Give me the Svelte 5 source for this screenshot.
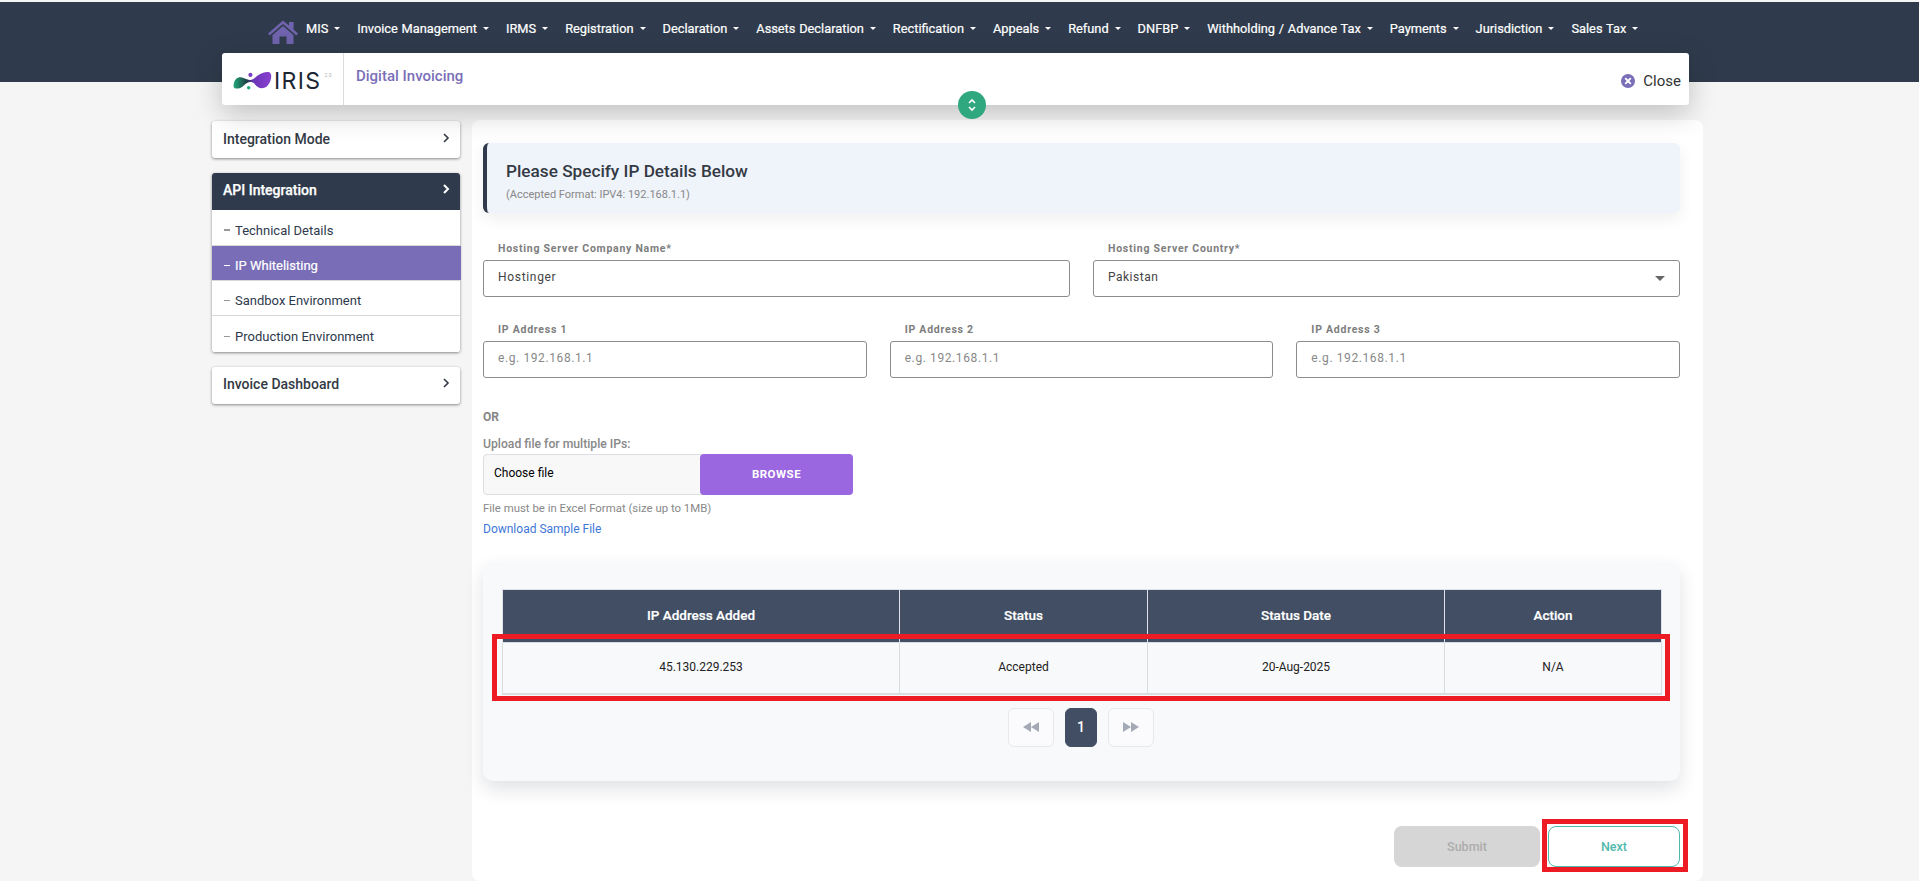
<script>
  const navItems = ['MIS','Invoice Management','IRMS','Registration','Declaration','Assets Declaration','Rectification','Appeals','Refund','DNFBP','Withholding / Advance Tax','Payments','Jurisdiction','Sales Tax'];
  const subItems = [
    { label: 'Technical Details', active: false },
    { label: 'IP Whitelisting', active: true },
    { label: 'Sandbox Environment', active: false },
    { label: 'Production Environment', active: false }
  ];
  const ipFields = ['IP Address 1','IP Address 2','IP Address 3'];
</script>

<div class="page">
  <div class="topbar">
    <nav class="nav">
      <svg class="home" viewBox="0 0 30 24" aria-hidden="true">
        <path d="M15 0.5 L0 13.5 L1.6 15.4 L15 4 L28.4 15.4 L30 13.5 L25.6 9.6 L25.6 2 L21 2 L21 5.6 Z" fill="#6f63ad"/>
        <path d="M15 6 L4.5 15 L4.5 24 L11.5 24 L11.5 16.5 L18.5 16.5 L18.5 24 L25.5 24 L25.5 15 Z" fill="#6f63ad"/>
      </svg>
      {#each navItems as item}
        <span class="nav-item">{item}<i class="caret"></i></span>
      {/each}
    </nav>
  </div>

  <header class="head-card">
    <div class="logo">
      <svg class="blob" viewBox="0 0 46 22" aria-hidden="true">
        <defs>
          <linearGradient id="g" x1="0" x2="1" y1="0" y2="0">
            <stop offset="0" stop-color="#1fa878"/>
            <stop offset="0.36" stop-color="#1f3d45"/>
            <stop offset="0.52" stop-color="#6a37b8"/>
            <stop offset="1" stop-color="#8a3fd0"/>
          </linearGradient>
        </defs>
        <path d="M0.5 17 C1 8 7 6 12 8 C17 10 20 12 25 8 C30 3 37 0 42 1.5 C46 4 44 13 39 18 C33 22 28 19 25 15 C21 11 16 13 12 17 C8 21 0 22 0.5 17 Z" fill="url(#g)"/>
        <circle cx="20" cy="4.5" r="2.4" fill="#7c3fc4"/>
        <circle cx="18" cy="19.5" r="2" fill="#1fa878"/>
      </svg>
      <span class="iris">IRIS</span>
      <span class="ver">2.0</span>
    </div>
    <div class="head-title">Digital Invoicing</div>
    <div class="close">
      <svg class="close-icon" viewBox="0 0 14 14" aria-hidden="true">
        <circle cx="7" cy="7" r="7" fill="#7a6fb8"/>
        <path d="M4.7 4.7 L9.3 9.3 M9.3 4.7 L4.7 9.3" stroke="#fff" stroke-width="1.9" stroke-linecap="round"/>
      </svg>
      <span>Close</span>
    </div>
  </header>

  <div class="toggle">
    <svg viewBox="0 0 10 14" aria-hidden="true">
      <path d="M2 5 L5 2 L8 5 M2 9 L5 12 L8 9" fill="none" stroke="#fff" stroke-width="1.6"/>
    </svg>
  </div>

  <div class="body">
    <aside class="side">
      <div class="side-card">
        <div class="side-head"><span>Integration Mode</span>
          <svg class="chev" viewBox="0 0 8 12"><path d="M2 2 L6 6 L2 10" fill="none" stroke="currentColor" stroke-width="1.6"/></svg>
        </div>
      </div>
      <div class="side-card">
        <div class="side-head dark"><span>API Integration</span>
          <svg class="chev" viewBox="0 0 8 12"><path d="M2 2 L6 6 L2 10" fill="none" stroke="currentColor" stroke-width="2"/></svg>
        </div>
        {#each subItems as s}
          <div class="sub" class:active={s.active}><i class="dash"></i>{s.label}</div>
        {/each}
      </div>
      <div class="side-card">
        <div class="side-head up"><span>Invoice Dashboard</span>
          <svg class="chev" viewBox="0 0 8 12"><path d="M2 2 L6 6 L2 10" fill="none" stroke="currentColor" stroke-width="1.6"/></svg>
        </div>
      </div>
    </aside>

    <main class="main">
      <section class="banner">
        <h1>Please Specify IP Details Below</h1>
        <p>(Accepted Format: IPV4: 192.168.1.1)</p>
      </section>

      <div class="row two">
        <div class="field">
          <span class="flabel">Hosting Server Company Name*</span>
          <div class="control">Hostinger</div>
        </div>
        <div class="field">
          <span class="flabel">Hosting Server Country*</span>
          <div class="control select">Pakistan<i class="sel-caret"></i></div>
        </div>
      </div>

      <div class="row three">
        {#each ipFields as f}
          <div class="field">
            <span class="flabel">{f}</span>
            <div class="control ph">e.g. 192.168.1.1</div>
          </div>
        {/each}
      </div>

      <div class="or">OR</div>
      <div class="upload-label">Upload file for multiple IPs:</div>
      <div class="file">
        <span class="choose">Choose file</span>
        <span class="browse">BROWSE</span>
      </div>
      <div class="hint">File must be in Excel Format (size up to 1MB)</div>
      <div class="dl">Download Sample File</div>

      <section class="table-card">
        <table>
          <thead>
            <tr>
              <th class="c1">IP Address Added</th>
              <th class="c2">Status</th>
              <th class="c3">Status Date</th>
              <th>Action</th>
            </tr>
          </thead>
          <tbody>
            <tr>
              <td>45.130.229.253</td>
              <td>Accepted</td>
              <td>20-Aug-2025</td>
              <td>N/A</td>
            </tr>
          </tbody>
        </table>
        <div class="pager">
          <span class="pg">
            <svg viewBox="0 0 18 12"><path d="M9 1 L9 11 L1 6 Z M17 1 L17 11 L9 6 Z" fill="#a3a9b5"/></svg>
          </span>
          <span class="pg cur">1</span>
          <span class="pg">
            <svg viewBox="0 0 18 12"><path d="M1 1 L1 11 L9 6 Z M9 1 L9 11 L17 6 Z" fill="#a3a9b5"/></svg>
          </span>
        </div>
      </section>

      <div class="actions">
        <span class="btn submit">Submit</span>
        <span class="btn next">Next</span>
      </div>
    </main>
  </div>

  <div class="mark mark-row"></div>
  <div class="mark mark-next"></div>
</div>

<style>
  :global(body) {
    margin: 0;
    background: #f5f5f5;
    font-family: Roboto, "Liberation Sans", sans-serif;
    overflow: hidden;
  }
  .page {
    position: relative;
    width: 1919px;
    height: 881px;
    padding-top: 2px;
    box-sizing: border-box;
    overflow: hidden;
    background: #f5f5f5;
  }
  .topbar {
    height: 80px;
    background: #2f3b4c;
  }
  .nav {
    display: flex;
    align-items: flex-start;
    gap: 17px;
    padding: 18px 0 0 268px;
  }
  .home { width: 30px; height: 24px; margin-right: -9px; }
  .nav-item {
    display: inline-flex;
    align-items: center;
    gap: 6px;
    height: 18px;
    margin-top: -1px;
    color: #fff;
    font-size: 12.8px;
    font-weight: 400;
    word-spacing: 0.6px;
    -webkit-text-stroke: 0.2px #fff;
    white-space: nowrap;
  }
  .caret {
    width: 0;
    height: 0;
    border-left: 3px solid transparent;
    border-right: 3px solid transparent;
    border-top: 3px solid #fff;
  }
  .head-card {
    position: relative;
    z-index: 3;
    display: flex;
    align-items: stretch;
    height: 52px;
    margin: -29px 230px 0 222px;
    background: #fff;
    border-radius: 3px;
    box-shadow: 0 8px 28px rgba(0, 0, 0, 0.22);
  }
  .logo {
    box-sizing: border-box;
    width: 122px;
    border-right: 1px solid #dcdcdc;
    display: flex;
    align-items: center;
    padding-left: 11px;
    flex: none;
  }
  .blob { width: 40px; height: 19px; margin-top: 3px; flex: none; }
  .iris {
    font-family: Inter, Roboto, sans-serif;
    font-size: 23px;
    font-weight: 400;
    color: #1d2733;
    letter-spacing: 1.4px;
    margin-top: 3px;
    margin-left: 1px;
  }
  .ver {
    font-size: 5px;
    color: #b5b5b5;
    align-self: flex-start;
    margin: 19px 0 0 3px;
  }
  .head-title {
    color: #7a6fb8;
    font-size: 15px;
    font-weight: 500;
    line-height: 18px;
    padding: 14px 0 0 12px;
    flex: 1;
  }
  .close {
    display: flex;
    align-items: center;
    gap: 8px;
    padding: 4px 8px 0 0;
    font-size: 15px;
    color: #333;
  }
  .close-icon { width: 14px; height: 14px; }
  .toggle {
    position: absolute;
    z-index: 4;
    left: 958px;
    top: 91px;
    width: 28px;
    height: 28px;
    border-radius: 50%;
    background: #2fa77f;
    display: flex;
    align-items: center;
    justify-content: center;
  }
  .toggle svg { width: 10px; height: 14px; }
  .body {
    display: flex;
    gap: 12px;
    padding: 15px 0 0 212px;
    align-items: flex-start;
  }
  .side {
    width: 248px;
    padding-top: 1px;
    display: flex;
    flex-direction: column;
    gap: 15px;
    flex: none;
  }
  .side-card {
    background: #fff;
    border-radius: 3px;
    box-shadow: 0 1px 3px rgba(0, 0, 0, 0.45);
  }
  .side-head {
    height: 37px;
    box-sizing: border-box;
    padding: 0 10px 2px 11px;
    display: flex;
    align-items: center;
    justify-content: space-between;
    font-size: 14px;
    font-weight: 500;
    color: #333a45;
  }
  .side-head.up { padding-bottom: 4px; }
  .side-head.dark {
    background: #2f3b4c;
    color: #fff;
    border-radius: 3px 3px 0 0;
    font-weight: 500;
    padding-bottom: 4px;
    -webkit-text-stroke: 0.25px #fff;
  }
  .chev { width: 8px; height: 12px; margin-top: -2px; }
  .sub {
    display: flex;
    align-items: center;
    height: 29px;
    padding: 5px 0 0 12px;
    font-size: 13px;
    color: #2e3a4c;
    border-bottom: 1px solid #d8d8d8;
    background: #fff;
  }
  .side-head.dark + .sub { height: 30px; }
  .sub:last-child { border-bottom: 0; height: 31px; border-radius: 0 0 3px 3px; }
  .sub.active {
    background: #786db6;
    color: #fff;
    margin-right: -1px;
    -webkit-text-stroke: 0.2px #fff;
  }
  .dash {
    width: 6px;
    height: 1.5px;
    background: #999;
    margin-right: 5px;
  }
  .sub.active .dash { background: #fff; }
  .main {
    width: 1231px;
    height: 761px;
    box-sizing: border-box;
    flex: none;
    background: #fff;
    border-radius: 8px;
    padding: 23px 23px 0 11px;
    display: flex;
    flex-direction: column;
  }
  .banner {
    height: 70px;
    box-sizing: border-box;
    background: #eff3fa;
    border-left: 4px solid #2f3b4c;
    border-radius: 6px;
    padding: 18px 0 0 19px;
    box-shadow: 0 6px 14px rgba(60, 70, 90, 0.08);
  }
  .banner h1 {
    margin: 0;
    font-size: 17.2px;
    line-height: 21px;
    font-weight: 500;
    color: #333a44;
  }
  .banner p {
    margin: 7px 0 0;
    font-size: 11px;
    line-height: 12px;
    color: #888;
  }
  .row { display: grid; column-gap: 23px; }
  .row.two { grid-template-columns: 1fr 1fr; margin-top: 47px; }
  .row.three { grid-template-columns: 1fr 1fr 1fr; margin-top: 44px; }
  .field { position: relative; }
  .flabel {
    position: absolute;
    left: 11px;
    top: -20px;
    height: 21px;
    line-height: 18px;
    padding: 0 4px;
    background: #fff;
    font-size: 10.5px;
    font-weight: 700;
    letter-spacing: 0.75px;
    color: #7d7d7d;
    white-space: nowrap;
  }
  .control {
    position: relative;
    height: 37px;
    box-sizing: border-box;
    border: 1px solid #8c8c8c;
    border-radius: 3px;
    padding: 0 14px 3px;
    display: flex;
    align-items: center;
    font-size: 12px;
    letter-spacing: 0.68px;
    color: #444;
  }
  .control.ph { color: #888; letter-spacing: 0.6px; }
  .control.select { letter-spacing: 0.5px; }
  .sel-caret {
    position: absolute;
    right: 14px;
    top: 15px;
    width: 0;
    height: 0;
    border-left: 5px solid transparent;
    border-right: 5px solid transparent;
    border-top: 5px solid #666;
  }
  .or {
    margin-top: 32px;
    font-size: 12px;
    font-weight: 700;
    line-height: 14px;
    color: #858585;
  }
  .upload-label {
    margin-top: 13px;
    font-size: 12.2px;
    font-weight: 500;
    line-height: 14px;
    color: #888;
  }
  .file {
    margin-top: 3px;
    width: 370px;
    height: 41px;
    box-sizing: border-box;
    display: flex;
    border: 1px solid #dcdee2;
    border-radius: 4px;
    background: #f8f8f9;
  }
  .choose {
    flex: 1;
    padding: 0 10px;
    font-size: 12px;
    line-height: 36px;
    color: #000;
  }
  .browse {
    width: 153px;
    margin: -1px;
    background: #9b67e0;
    color: #fff;
    border-radius: 4px;
    font-size: 11.5px;
    font-weight: 700;
    letter-spacing: 0.5px;
    text-align: center;
    line-height: 41px;
  }
  .hint {
    margin-top: 6px;
    font-size: 11.4px;
    line-height: 14px;
    color: #888;
  }
  .dl {
    margin-top: 7px;
    font-size: 12px;
    line-height: 14px;
    color: #3f78d8;
  }
  .table-card {
    margin-top: 26px;
    height: 219px;
    box-sizing: border-box;
    background: #f8f9fb;
    border-radius: 10px;
    padding: 27px 18px 0 19px;
    box-shadow: 0 8px 18px rgba(40, 50, 70, 0.14);
  }
  table {
    width: 100%;
    table-layout: fixed;
    border-collapse: collapse;
    font-size: 12px;
  }
  th {
    height: 53px;
    padding: 0 0 3px;
    box-sizing: border-box;
    background: #414e63;
    color: #fff;
    font-size: 13.5px;
    font-weight: 500;
    -webkit-text-stroke: 0.2px #fff;
    border: 1px solid #dfe2e6;
    border-bottom: 0;
  }
  td {
    height: 51px;
    padding: 0 0 2px;
    box-sizing: border-box;
    text-align: center;
    color: #222;
    border: 1px solid #d9dce0;
    border-bottom-width: 2px;
  }
  .c1 { width: 397px; }
  .c2 { width: 248px; }
  .c3 { width: 297px; }
  .pager {
    display: flex;
    justify-content: center;
    gap: 11px;
    margin: 13px 0 0 -2px;
  }
  .pg {
    width: 46px;
    height: 39px;
    box-sizing: border-box;
    display: flex;
    align-items: center;
    justify-content: center;
    border: 1px solid #e6e8ec;
    border-radius: 6px;
    background: #fbfbfd;
  }
  .pg svg { width: 18px; height: 12px; }
  .pg.cur {
    width: 32px;
    background: #414e63;
    border-color: #414e63;
    color: #fff;
    font-size: 14px;
    font-weight: 500;
  }
  .actions {
    margin-top: 45px;
    display: flex;
    justify-content: flex-end;
    gap: 8px;
  }
  .btn {
    height: 41px;
    box-sizing: border-box;
    display: flex;
    align-items: center;
    justify-content: center;
    border-radius: 8px;
    font-size: 12.5px;
    font-weight: 500;
  }
  .submit { width: 146px; background: #d6d6d6; color: #acacac; }
  .next {
    width: 132px;
    background: #fff;
    color: #4fb9ab;
    border: 1px solid #4fb9ab;
  }
  .mark {
    position: absolute;
    z-index: 5;
    box-sizing: border-box;
    border: 5px solid #ed1c24;
    pointer-events: none;
  }
  .mark-row { left: 492px; top: 634px; width: 1178px; height: 67px; }
  .mark-next { left: 1542px; top: 819px; width: 146px; height: 53px; }
</style>
